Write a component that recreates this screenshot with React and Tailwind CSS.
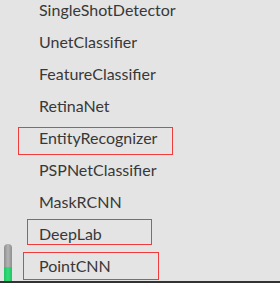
import React from "react";

const models = [
  { name: "SingleShotDetector" },
  { name: "UnetClassifier" },
  { name: "FeatureClassifier" },
  { name: "RetinaNet" },
  { name: "EntityRecognizer", box: "left-[18px] top-[5px] w-[155px] h-[28px]" },
  { name: "PSPNetClassifier" },
  { name: "MaskRCNN" },
  { name: "DeepLab", box: "left-[27px] top-[1px] w-[125px] h-[26px]" },
  { name: "PointCNN", box: "left-[23px] top-[2px] w-[136px] h-[28px]" },
];

export default function App() {
  return (
    <div className="relative w-[280px] h-[283px] overflow-hidden bg-[#e4e4e4] font-['Lato',sans-serif]">
      <ul className="mt-[-6px]">
        {models.map((m) => (
          <li key={m.name} className="relative h-8 flex items-center pl-[39px] text-[16px] text-[#383838]">
            {m.name}
            {m.box && (
              <span className={`absolute border border-[#f03c3c] ${m.box}`} />
            )}
          </li>
        ))}
      </ul>

      {/* little level gauge on the left */}
      <div className="absolute left-[4px] top-[244px] w-[8px] h-[37px] rounded-t-[4px] bg-gradient-to-r from-[#8e8e8e] via-[#b4b4b4] to-[#8e8e8e] flex flex-col justify-end overflow-hidden">
        <div className="h-[14px] bg-gradient-to-r from-[#1fc463] via-[#35dc7a] to-[#1fc463]" />
      </div>

      <div className="absolute left-0 right-0 bottom-0 h-[2px] bg-[#333333]" />
    </div>
  );
}
